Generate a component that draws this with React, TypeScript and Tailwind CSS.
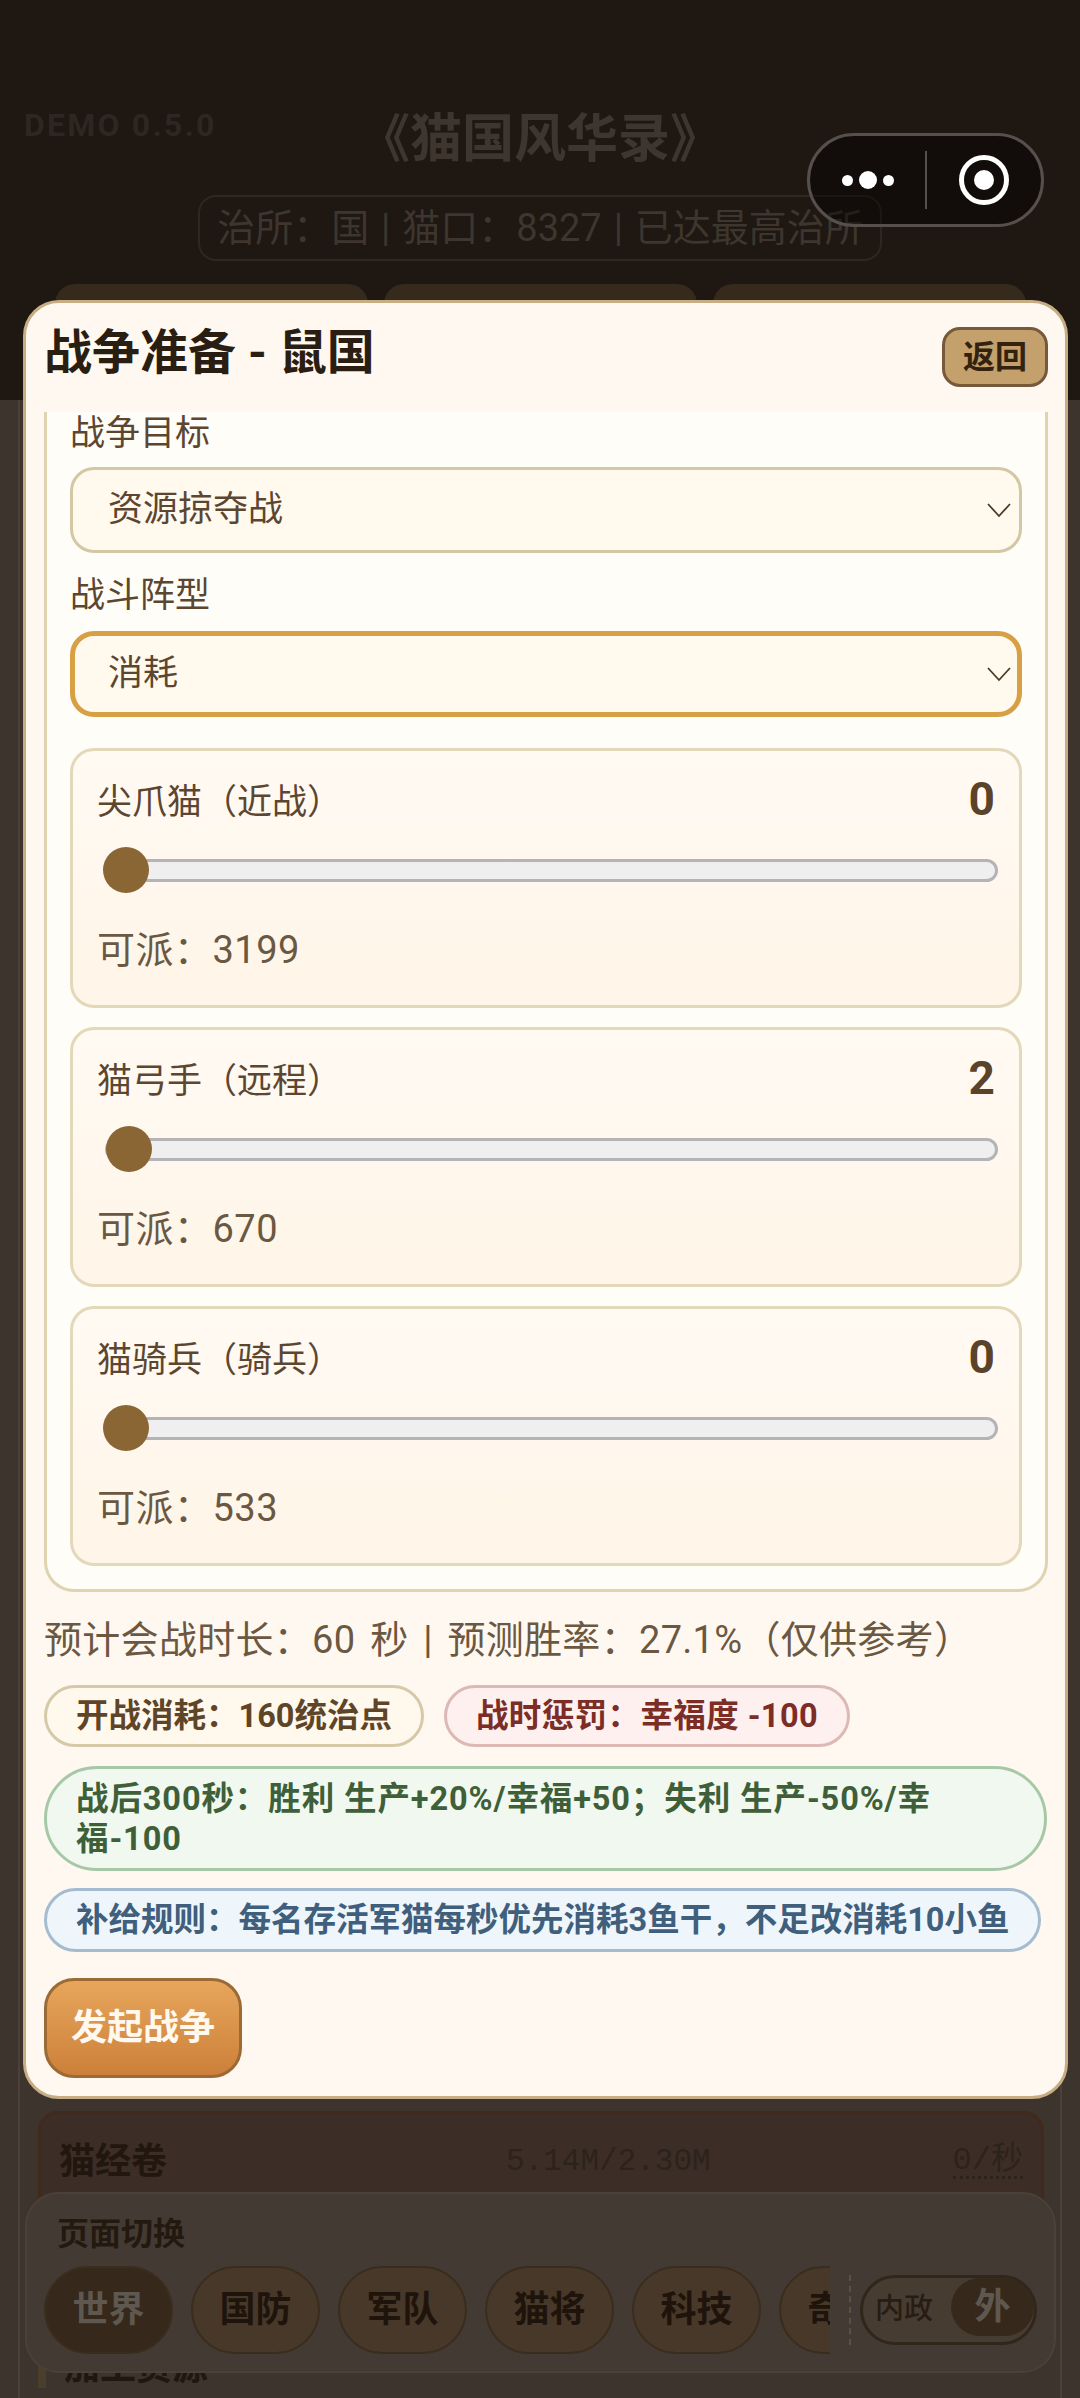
import React from "react";

const font = { fontFamily: '"Roboto","Noto Sans CJK SC",sans-serif' };

function Chevron() {
  return (
    <svg width="26" height="16" viewBox="0 0 26 16" className="shrink-0" fill="none">
      <path d="M2 2 L13 14 L24 2" stroke="#4a3a28" strokeWidth="1.8" />
    </svg>
  );
}

function SelectBox({ text, active }: { text: string; active?: boolean }) {
  return (
    <div
      className={
        active
          ? "h-[86px] rounded-[24px] border-[5px] border-[#d8a044] bg-[#fff9ee] flex items-center justify-between pl-[33px] pr-[5px] text-[35px] text-[#5c4630]"
          : "h-[86px] rounded-[24px] border-[3px] border-[#d4c7a4] bg-[#fff9ee] flex items-center justify-between pl-[35px] pr-[7px] text-[35px] text-[#5c4630]"
      }
    >
      <span>{text}</span>
      <Chevron />
    </div>
  );
}

function UnitCard({ name, value, avail, offset }: { name: string; value: string; avail: string; offset: number }) {
  return (
    <div className="h-[260px] rounded-[24px] border-[3px] border-[#e3d8b9] bg-gradient-to-b from-[#fffaf3] to-[#fff5e8] px-[24px] flex flex-col">
      <div className="flex items-center justify-between h-[50px] mt-[26px] text-[#5c4630]">
        <span className="text-[35px] leading-none">{name}</span>
        <span className="-mt-[7px] text-[46px] font-bold text-[#5a4329] leading-none">{value}</span>
      </div>
      <div className="relative h-[46px] mt-[20px] -mr-[3px] flex items-center pl-[8px]">
        <div className="h-[23px] w-full rounded-full border-[3px] border-[#b4b4b6] bg-[#efefef]" />
        <div className="absolute top-0 w-[46px] h-[46px] rounded-full bg-[#8b6635]" style={{ left: offset }} />
      </div>
      <div className="mt-[33px] text-[38px] leading-[48px] tracking-[0.5px] text-[#6b5842]">可派：{avail}</div>
    </div>
  );
}

function Chip({ cls, children }: { cls: string; children: React.ReactNode }) {
  return <div className={"rounded-full border-[3px] px-[29px] text-[32.5px] font-bold leading-[40px] " + cls}>{children}</div>;
}

function NavBtn({ text, active }: { text: string; active?: boolean }) {
  return (
    <div
      className={
        "w-[129px] h-[88px] shrink-0 rounded-[44px] border-[2px] border-[#3a2d1d] flex items-center justify-center text-[36px] font-bold " +
        (active ? "bg-[#36291b] text-[#5f5850]" : "bg-[#47382a] text-[#1e140b]")
      }
    >
      {text}
    </div>
  );
}

export default function App() {
  return (
    <div className="relative w-[1080px] h-[2398px] overflow-hidden bg-[#3d342e]" style={font}>
      {/* page under the dim layer */}
      <div className="h-[400px] bg-[#1e1712] flex flex-col items-center">
        <div className="self-start ml-[24px] mt-[108px] h-0 text-[32px] leading-[34px] font-bold text-[#2e2620] tracking-[2.2px]">DEMO 0.5.0</div>
        <div className="text-[52px] leading-[64px] font-bold text-[#3d352e]">《猫国风华录》</div>
        <div className="mt-[23px] w-[684px] h-[66px] rounded-[18px] border-[2px] border-[#2f271f] flex items-center justify-center text-[38px] [word-spacing:2.5px] text-[#3d352e] whitespace-nowrap">
          治所：国 | 猫口：8327 | 已达最高治所
        </div>
        <div className="mt-[23px] flex gap-[16px]">
          <div className="w-[313px] h-[60px] rounded-[20px] bg-[#352a1c]" />
          <div className="w-[313px] h-[60px] rounded-[20px] bg-[#352a1c]" />
          <div className="w-[313px] h-[60px] rounded-[20px] bg-[#352a1c]" />
        </div>
      </div>
      <div className="mx-[18px] h-[1998px] border-x-[2px] border-[#4a4139] pt-[1711px] pl-[18px] pr-[16px]">
        <div className="h-[170px] rounded-[20px] border-[3px] border-[#3f2a1d] bg-[#3c2d26] flex pt-[21px] pl-[18px] pr-[18px]">
          <span className="w-[447px] text-[36px] font-bold text-[#22170f]">猫经卷</span>
          <span className="mt-[4px] text-[31px] text-[#2c231c]" style={{ fontFamily: '"Liberation Mono","Noto Sans CJK SC",monospace' }}>5.14M/2.30M</span>
          <span className="ml-auto h-[44px] text-[32px] leading-[52px] text-[#2c231c] border-b-[3px] border-dotted border-[#2c231c]" style={{ fontFamily: '"Liberation Mono","Noto Sans CJK SC",monospace' }}>0/秒</span>
        </div>
        <div className="mt-[72px] border-l-[8px] border-[#4a3f2c] pl-[18px] h-[35px] text-[36px] leading-[30px] font-bold text-[#21170f]">加工资源</div>
      </div>

      {/* bottom nav */}
      <div className="absolute left-[25px] top-[2192px] w-[1031px] h-[181px] rounded-[34px] border-[2px] border-[#4c4137] bg-[#433a34] px-[17px] pt-[19px]">
        <div className="text-[32px] leading-[42px] font-bold text-[#23190f] ml-[13px]">页面切换</div>
        <div className="mt-[11px] flex items-center">
          <div className="w-[786px] flex gap-[18px] overflow-hidden">
            <NavBtn text="世界" active />
            <NavBtn text="国防" />
            <NavBtn text="军队" />
            <NavBtn text="猫将" />
            <NavBtn text="科技" />
            <NavBtn text="奇观" />
          </div>
          <div className="ml-[19px] h-[70px] border-l-[2px] border-dashed border-[#5a5047]" />
          <div className="ml-[9px] w-[177px] h-[70px] rounded-full border-[3px] border-[#30261a] bg-[#463c32] flex items-center justify-between pl-[12px]">
            <span className="text-[29px] font-medium text-[#271d14]">内政</span>
            <span className="w-[83px] h-[58px] -mt-[6px] rounded-full bg-[#36291b] flex items-center justify-center text-[36px] font-bold text-[#5f5850]">外</span>
          </div>
        </div>
      </div>

      {/* capsule */}
      <div className="absolute left-[807px] top-[133px] w-[237px] h-[94px] rounded-full border-[3px] border-[#55504c] bg-black/40 flex items-center">
        <div className="w-[115px] flex items-center justify-center gap-[6px]">
          <span className="w-[11px] h-[11px] rounded-full bg-white" />
          <span className="w-[18px] h-[18px] rounded-full bg-white" />
          <span className="w-[11px] h-[11px] rounded-full bg-white" />
        </div>
        <div className="w-[2px] h-[58px] bg-[#55504c]" />
        <div className="flex-1 flex items-center justify-center">
          <div className="w-[50px] h-[50px] rounded-full border-[5px] border-white flex items-center justify-center">
            <span className="w-[20px] h-[20px] rounded-full bg-white" />
          </div>
        </div>
      </div>

      {/* modal */}
      <div className="absolute left-[23px] top-[300px] w-[1045px] h-[1799px] rounded-[36px] border-[3px] border-[#c7ad83] bg-[#fff8f0] flex flex-col">
        <div className="h-[109px] shrink-0 flex items-start justify-between pl-[18px] pr-[17px]">
          <span className="mt-[18px] text-[48px] leading-[64px] font-bold text-[#2a1e12] whitespace-pre">战争准备 - 鼠国</span>
          <span className="mt-[24px] w-[106px] h-[60px] rounded-[18px] border-[3px] border-[#75593a] bg-[#c3a06c] flex items-center justify-center text-[32px] font-semibold text-[#33220f]">返回</span>
        </div>
        <div className="flex-1 overflow-hidden pl-[18px] flex flex-col">
          <div className="w-[1004px] h-[1180px] shrink-0 rounded-b-[30px] border-x-[3px] border-b-[3px] border-[#e0d3b2] bg-[#fffdf8] px-[23px] flex flex-col">
            <div className="text-[35px] leading-[44px] text-[#5c4630]">战争目标</div>
            <div className="mt-[11px]"><SelectBox text="资源掠夺战" /></div>
            <div className="text-[35px] leading-[44px] text-[#5c4630] mt-[21px]">战斗阵型</div>
            <div className="mt-[13px]"><SelectBox text="消耗" active /></div>
            <div className="mt-[31px] flex flex-col gap-[19px]">
              <UnitCard name="尖爪猫（近战）" value="0" avail="3199" offset={6} />
              <UnitCard name="猫弓手（远程）" value="2" avail="670" offset={9} />
              <UnitCard name="猫骑兵（骑兵）" value="0" avail="533" offset={6} />
            </div>
          </div>
          <div className="mt-[24px] text-[38px] leading-[48px] tracking-[0.3px] [word-spacing:5px] text-[#6b5842] whitespace-nowrap">预计会战时长：60 秒 | 预测胜率：27.1%（仅供参考）</div>
          <div className="mt-[21px] flex gap-[20px]">
            <Chip cls="h-[62px] flex items-center border-[#d6c9a8] bg-[#fff8ec] text-[#5f4527]">开战消耗：160统治点</Chip>
            <Chip cls="h-[62px] flex items-center tracking-[0.4px] border-[#dcb9b4] bg-[#fdf0ee] text-[#7b2d26]">战时惩罚：幸福度 -100</Chip>
          </div>
          <Chip cls="mt-[19px] h-[105px] w-[1003px] flex items-center rounded-[50px] tracking-[0.9px] border-[#a7c8a6] bg-[#f0f8ef] text-[#3e5f38]">
            <span>战后300秒：胜利 生产+20%/幸福+50；失利 生产-50%/幸<br />福-100</span>
          </Chip>
          <Chip cls="mt-[17px] h-[64px] w-[997px] flex items-center whitespace-nowrap border-[#a4bbd0] bg-[#eef6fc] text-[#3f5f7c]">补给规则：每名存活军猫每秒优先消耗3鱼干，不足改消耗10小鱼</Chip>
          <div className="mt-[26px] w-[198px] h-[100px] rounded-[30px] border-[3px] border-[#9c6a34] bg-gradient-to-b from-[#e7a65b] to-[#cc803a] flex items-center justify-center text-[36px] font-bold text-[#fff8ee]">发起战争</div>
        </div>
      </div>
    </div>
  );
}
